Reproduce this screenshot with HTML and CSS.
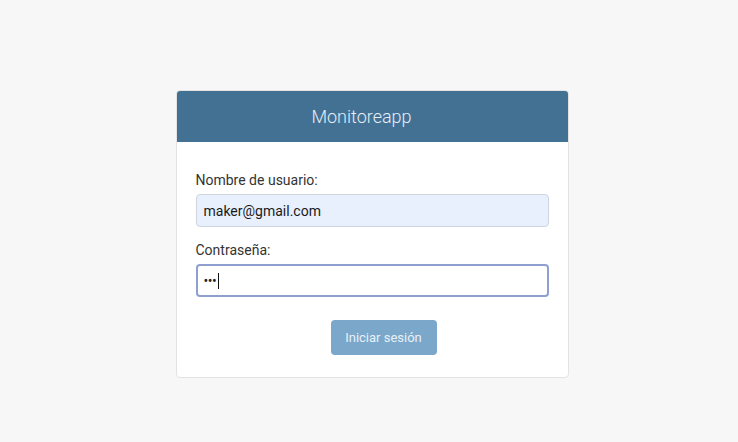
FILE: index.html
```html
<!DOCTYPE html>
<html lang="es">
<head>
<meta charset="utf-8">
<title>Monitoreapp</title>
<link rel="stylesheet" href="styles.css">
</head>
<body>
<main class="page">
  <section class="card">
    <header class="card-header">Monitoreapp</header>
    <form class="card-body">
      <label class="label">Nombre de usuario:</label>
      <div class="field field-autofill">maker@gmail.com</div>
      <label class="label label-second">Contraseña:</label>
      <div class="field field-focus"><span class="dots">•••</span><span class="caret"></span></div>
      <div class="actions">
        <button type="button" class="btn">Iniciar sesión</button>
      </div>
    </form>
  </section>
</main>
</body>
</html>
```
FILE: styles.css
```css
html, body {
  margin: 0;
  padding: 0;
  background: #f7f7f7;
  font-family: Roboto, "Noto Sans", "Liberation Sans", sans-serif;
}
.page {
  width: 738px;
  height: 442px;
  display: flex;
  justify-content: center;
  padding-top: 90px;
  padding-left: 6px;
  box-sizing: border-box;
}
.card {
  width: 393px;
  height: 288px;
  box-sizing: border-box;
  background: #ffffff;
  border: 1px solid #e3e3e3;
  border-radius: 4px;
  overflow: hidden;
  display: flex;
  flex-direction: column;
  align-self: flex-start;
}
.card-header {
  height: 51px;
  background: #437194;
  color: #e6eef6;
  font-weight: 300;
  font-size: 18px;
  display: flex;
  align-items: center;
  justify-content: center;
  padding-right: 21px;
  box-sizing: border-box;
}
.card-body {
  margin: 0;
  padding: 30px 19px 0 19px;
  display: flex;
  flex-direction: column;
}
.label {
  font-size: 14px;
  color: #333;
  line-height: 16px;
  margin-bottom: 6px;
}
.label-second {
  margin-top: 15px;
}
.field {
  height: 33px;
  box-sizing: border-box;
  border: 1px solid #cfd3dc;
  border-radius: 4px;
  padding: 0 7px;
  display: flex;
  align-items: center;
  font-size: 14px;
  color: #1a1a1a;
}
.field-autofill {
  background: #e8f0fe;
  border-color: #cfd4e0;
}
.field-focus {
  background: #fff;
  border: 2px solid #8f9fcf;
  padding: 0 6px;
}
.dots {
  font-size: 14px;
  letter-spacing: -0.5px;
  color: #222;
}
.caret {
  display: inline-block;
  width: 1px;
  height: 16px;
  background: #111;
  margin-left: 2px;
}
.actions {
  display: flex;
  justify-content: center;
  margin-top: 23px;
  padding-left: 23px;
}
.btn {
  width: 106px;
  height: 35px;
  border: none;
  border-radius: 4px;
  background: #7aa7ca;
  color: #e8f1f8;
  font-family: Roboto, "Noto Sans", "Liberation Sans", sans-serif;
  font-size: 13px;
  padding: 0;
}
```
